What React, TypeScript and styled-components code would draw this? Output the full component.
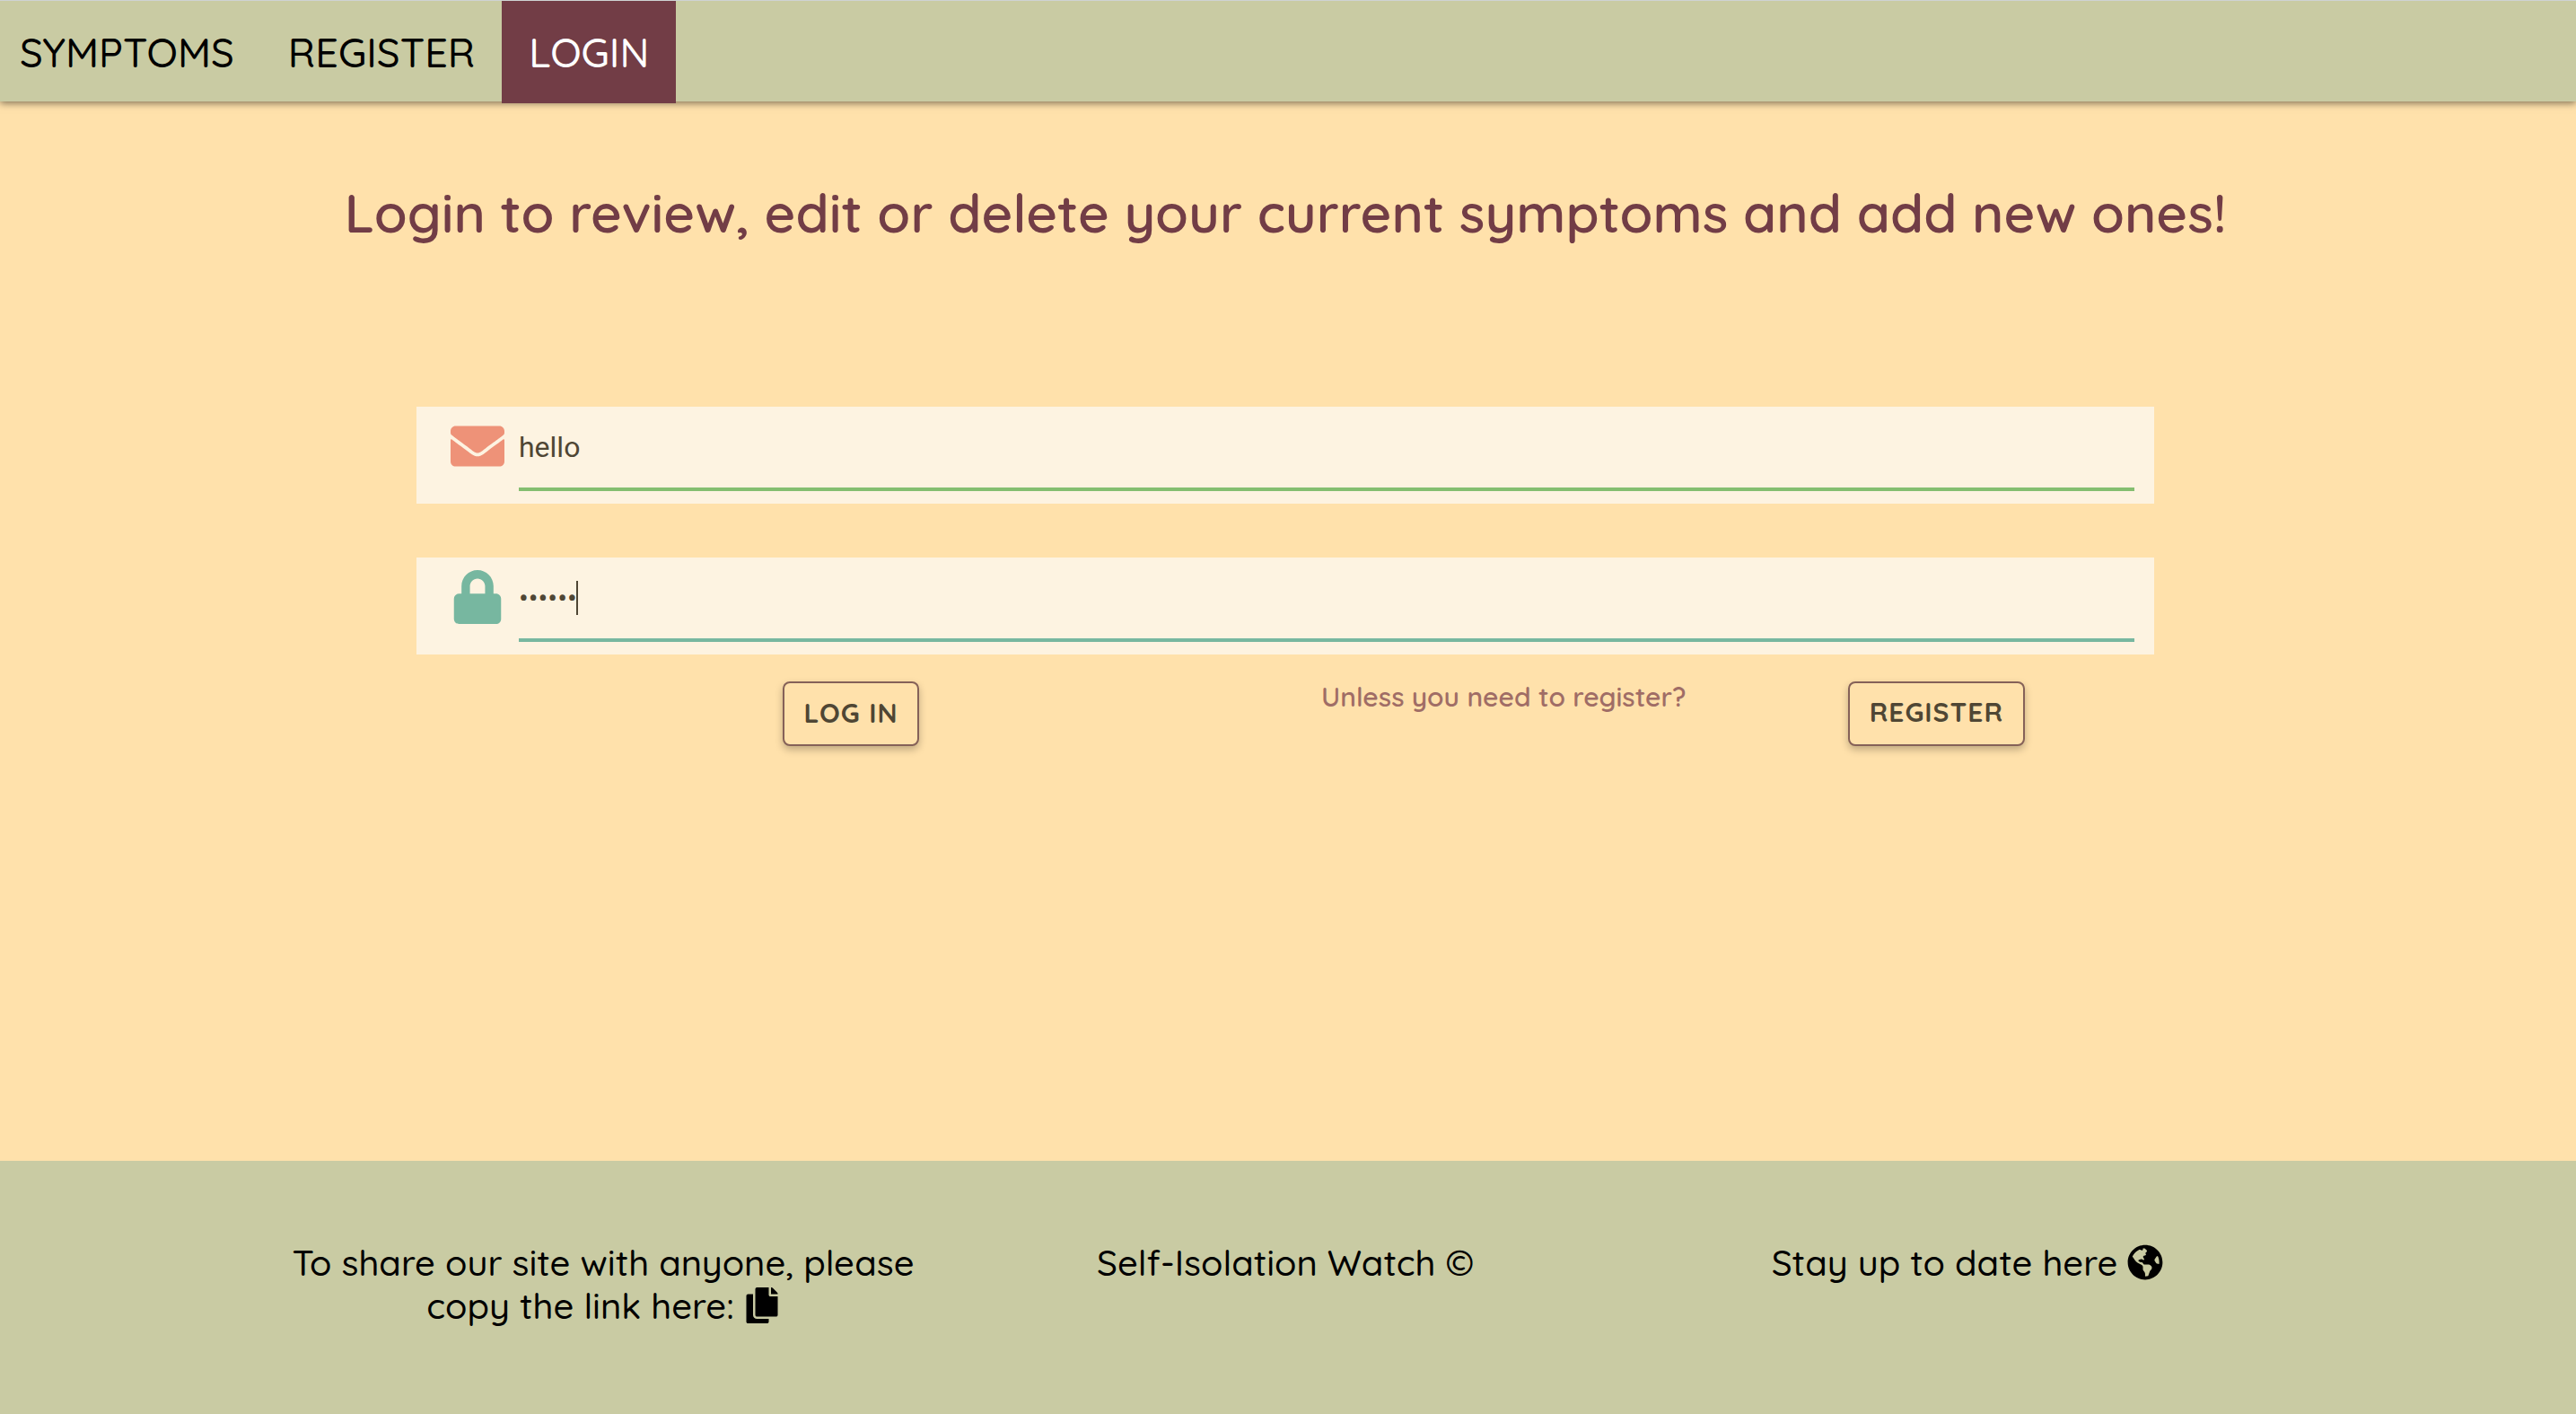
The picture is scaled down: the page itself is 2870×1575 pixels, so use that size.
import React from 'react';
import styled, { createGlobalStyle } from 'styled-components';
import { FaEnvelope, FaLock, FaCopy, FaGlobeAmericas } from 'react-icons/fa';

const GlobalStyle = createGlobalStyle`
  * { box-sizing: border-box; }
  body {
    margin: 0;
    background: #ffe1ab;
    color: #000;
    font-family: Quicksand, Lato, sans-serif;
  }
`;

const Page = styled.div`
  min-height: 100vh;
  display: flex;
  flex-direction: column;
`;

const Nav = styled.nav`
  display: flex;
  height: 113px;
  background: #c9cba3;
  border-top: 1px solid #cfd3d3;
  box-shadow: 0 2px 8px rgba(0, 0, 0, 0.5);
`;

const NavLink = styled.a<{ $active?: boolean; $first?: boolean }>`
  height: 114px;
  padding: 0 30px 0 ${(p) => (p.$first ? 22 : 30)}px;
  font-size: 45px;
  font-weight: 500;
  line-height: 114px;
  text-decoration: none;
  color: ${(p) => (p.$active ? '#fff' : '#000')};
  background: ${(p) => (p.$active ? '#723d46' : 'transparent')};
`;

const Main = styled.main`
  flex: 1;
  display: flex;
  flex-direction: column;
  align-items: center;
  padding-right: 6px;
`;

const Title = styled.h1`
  margin: 84px 0 0;
  font-size: 60px;
  font-weight: 600;
  line-height: 80px;
  color: #723d46;
`;

const Form = styled.form`
  width: 67.6%;
  margin-top: 176px;
`;

const Field = styled.label`
  position: relative;
  display: flex;
  align-items: flex-start;
  height: 108px;
  margin-bottom: 60px;
  padding: 0 22px 0 38px;
  background: #fdf3e1;
`;

const IconBox = styled.span<{ $color: string }>`
  display: flex;
  justify-content: center;
  align-items: center;
  width: 60px;
  height: 87px;
  margin-right: 16px;
  font-size: 60px;
  color: ${(p) => p.$color};
`;

const Input = styled.input<{ $line: string }>`
  flex: 1;
  min-width: 0;
  height: 94px;
  padding: 0;
  border: 0;
  border-bottom: 4px solid ${(p) => p.$line};
  outline: 0;
  background: transparent;
  font-family: Roboto, sans-serif;
  font-size: 32px;
  color: #4f4634;
  caret-color: transparent;
`;

/* steady text cursor after the last password dot */
const Caret = styled.span`
  position: absolute;
  left: 178px;
  top: 26px;
  width: 2px;
  height: 38px;
  background: #4f4634;
`;

const Actions = styled.div`
  display: grid;
  grid-template-columns: 1fr 1fr;
  margin-top: -30px;
`;

const Cell = styled.div`
  display: flex;
  justify-content: center;
`;

const SignUp = styled.div`
  display: flex;
  justify-content: space-between;
  padding: 0 144px 0 40px;
`;

const Hint = styled.p`
  margin: 0;
  font-size: 30px;
  font-weight: 600;
  line-height: 34px;
  color: #a06d66;
`;

const Button = styled.button`
  height: 72px;
  padding: 0 22px 2px;
  border: 2px solid #856158;
  border-radius: 8px;
  background: #ffe1ab;
  box-shadow: 0 4px 8px rgba(0, 0, 0, 0.25);
  font-family: inherit;
  font-size: 30px;
  font-weight: 700;
  line-height: 64px;
  letter-spacing: 1px;
  text-decoration: none;
  color: #4f4634;
`;

const Footer = styled.footer`
  display: grid;
  grid-template-columns: 1fr 1fr 1fr;
  height: 282px;
  padding: 89px 298px 0 292px;
  background: #c9cba3;
`;

const Note = styled.p`
  margin: 0;
  padding: 0 30px;
  font-size: 40px;
  font-weight: 500;
  line-height: 48px;
  text-align: center;
  svg { vertical-align: -5px; }
`;

export default function App() {
  return (
    <Page>
      <GlobalStyle />
      <Nav>
        <NavLink href="#symptoms" $first>SYMPTOMS</NavLink>
        <NavLink href="#register">REGISTER</NavLink>
        <NavLink href="#login" $active>LOGIN</NavLink>
      </Nav>
      <Main>
        <Title>Login to review, edit or delete your current symptoms and add new ones!</Title>
        <Form onSubmit={(e) => e.preventDefault()}>
          <Field>
            <IconBox $color="#ee9278"><FaEnvelope /></IconBox>
            <Input $line="#84be70" type="text" aria-label="Email" defaultValue="hello" />
          </Field>
          <Field>
            <IconBox $color="#77b7a0"><FaLock /></IconBox>
            <Input $line="#77b7a0" type="password" aria-label="Password" defaultValue="secret" autoFocus />
            <Caret />
          </Field>
          <Actions>
            <Cell><Button type="submit">LOG IN</Button></Cell>
            <SignUp>
              <Hint>Unless you need to register?</Hint>
              <Button as="a" href="#register">REGISTER</Button>
            </SignUp>
          </Actions>
        </Form>
      </Main>
      <Footer>
        <Note>To share our site with anyone, please copy the link here: <FaCopy /></Note>
        <Note>Self-Isolation Watch ©</Note>
        <Note>Stay up to date here <FaGlobeAmericas /></Note>
      </Footer>
    </Page>
  );
}
